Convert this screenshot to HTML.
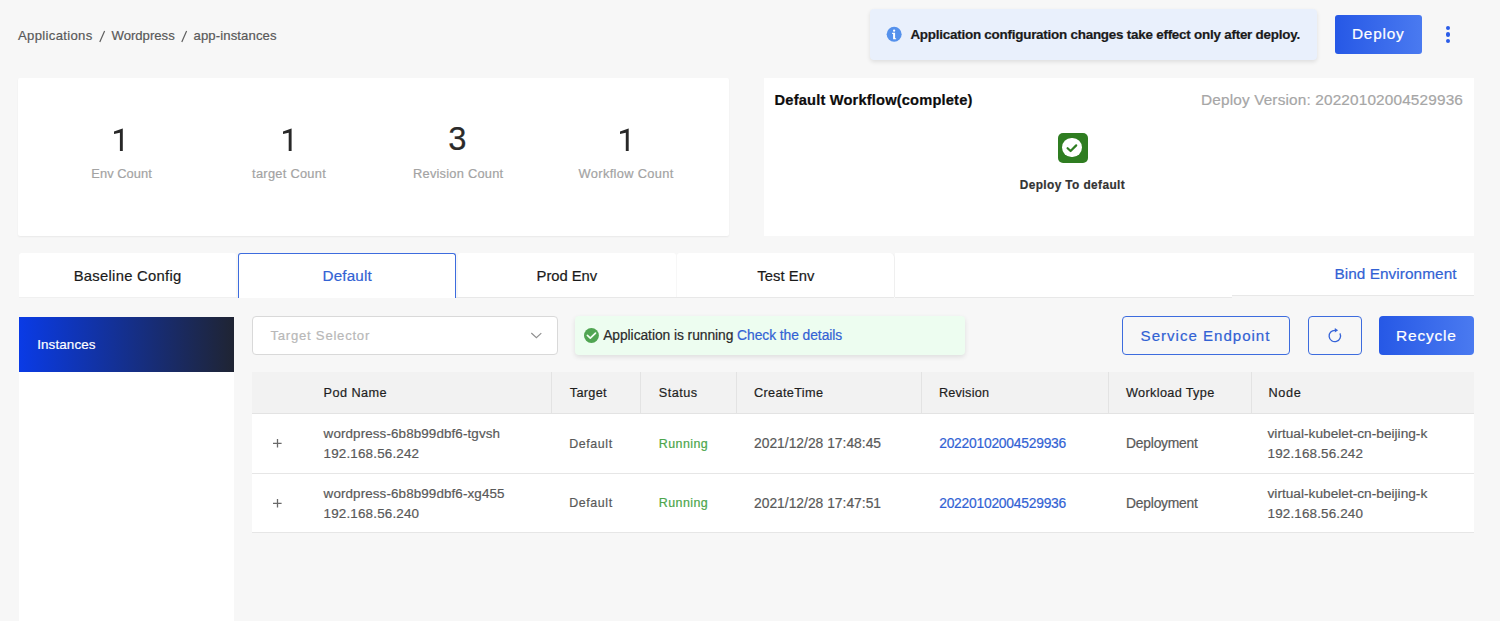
<!DOCTYPE html>
<html><head><meta charset="utf-8">
<style>
html,body{margin:0;padding:0;}
body{width:1500px;height:621px;overflow:hidden;background:#f7f7f7;position:relative;font-family:"Liberation Sans",sans-serif;}
.a{position:absolute;}
.t{position:absolute;white-space:nowrap;line-height:1;-webkit-text-stroke:0.2px currentColor;}
.card{position:absolute;background:#fff;border-radius:2px;box-shadow:0 1px 2px rgba(0,0,0,0.06);}
.tab{position:absolute;top:253px;height:44px;background:#fff;border-radius:3px 3px 0 0;box-sizing:border-box;}
.hd{position:absolute;top:372px;height:41px;width:1px;background:#e3e3e3;}
.row{position:absolute;left:252px;width:1222px;background:#fff;border-bottom:1px solid #e6e6e6;box-sizing:border-box;}
</style></head><body>

<!-- breadcrumb -->
<span class="t" style="left:18px;top:29px;font-size:13.13px;letter-spacing:0.32px;color:#595959;">Applications</span>
<svg class="a" style="left:97px;top:29px;" width="10" height="15" viewBox="0 0 10 15"><path d="M2.8 13 L7.6 2" stroke="#5e5e5e" stroke-width="1.15"/></svg>
<span class="t" style="left:111.5px;top:29px;font-size:13.13px;color:#595959;">Wordpress</span>
<svg class="a" style="left:178.7px;top:29px;" width="10" height="15" viewBox="0 0 10 15"><path d="M2.8 13 L7.6 2" stroke="#5e5e5e" stroke-width="1.15"/></svg>
<span class="t" style="left:193.5px;top:29px;font-size:13.13px;letter-spacing:0.11px;color:#595959;">app-instances</span>

<!-- info alert -->
<div class="a" style="left:870px;top:9px;width:447px;height:51px;background:#e9f0fc;border-radius:4px;box-shadow:0 2px 4px rgba(0,0,0,0.10);"></div>
<svg class="a" style="left:884px;top:24px;" width="20" height="20" viewBox="0 0 20 20"><circle cx="10.15" cy="10.3" r="7.5" fill="#5591ec"/><circle cx="10.1" cy="6.7" r="1.15" fill="#fff"/><path d="M8.1 8.8 H11.1 V14.2 H12.1 V15.3 H9.1 V9.9 H8.1 Z" fill="#fff"/></svg>
<span class="t" style="left:910.4px;top:27.9px;font-size:13.41px;font-weight:700;letter-spacing:-0.23px;color:#1a1a1a;">Application configuration changes take effect only after deploy.</span>

<!-- deploy btn -->
<div class="a" style="left:1335px;top:15px;width:87px;height:39px;border-radius:3px;background:linear-gradient(90deg,#2658e6,#4a7af0);"></div>
<span class="t" style="left:1352px;top:25.9px;font-size:15.36px;letter-spacing:0.77px;color:#fff;">Deploy</span>
<!-- kebab -->
<div class="a" style="left:1445.8px;top:25.8px;width:4.4px;height:4.4px;border-radius:50%;background:#2a5ce8;"></div>
<div class="a" style="left:1445.8px;top:32.3px;width:4.4px;height:4.4px;border-radius:50%;background:#2a5ce8;"></div>
<div class="a" style="left:1445.8px;top:38.8px;width:4.4px;height:4.4px;border-radius:50%;background:#2a5ce8;"></div>

<!-- card 1 -->
<div class="card" style="left:18px;top:78px;width:711px;height:158px;"></div>
<svg class="a" style="left:113.3px;top:127px;" width="14" height="26" viewBox="0 0 14 26"><path d="M6.90 24 V5.7 L1.00 7.1 V4.6 L9.60 1.4 H9.80 V24 Z" fill="#282828"/></svg>
<span class="t" style="left:91.3px;top:167.9px;font-size:12.85px;letter-spacing:0.06px;color:#a3a3a3;">Env Count</span>
<svg class="a" style="left:282px;top:127px;" width="14" height="26" viewBox="0 0 14 26"><path d="M6.70 24 V5.7 L1.00 7.1 V4.6 L9.40 1.4 H9.60 V24 Z" fill="#282828"/></svg>
<span class="t" style="left:252.1px;top:167.9px;font-size:12.85px;letter-spacing:0.27px;color:#a3a3a3;">target Count</span>
<span class="t" style="left:448.2px;top:122.9px;font-size:32.8px;color:#2a2a2a;">3</span>
<span class="t" style="left:413px;top:167.9px;font-size:12.85px;letter-spacing:0.23px;color:#a3a3a3;">Revision Count</span>
<svg class="a" style="left:618.8px;top:127px;" width="14" height="26" viewBox="0 0 14 26"><path d="M6.80 24 V5.7 L1.00 7.1 V4.6 L9.50 1.4 H9.70 V24 Z" fill="#282828"/></svg>
<span class="t" style="left:578.6px;top:167.9px;font-size:12.85px;letter-spacing:0.33px;color:#a3a3a3;">Workflow Count</span>

<!-- card 2 -->
<div class="a" style="left:764px;top:78px;width:710px;height:158px;background:#fff;"></div>
<span class="t" style="left:774.6px;top:93px;font-size:14.66px;font-weight:700;letter-spacing:0.17px;color:#0d0d0d;">Default Workflow(complete)</span>
<span class="t" style="left:1201px;top:92px;font-size:15.36px;letter-spacing:0.15px;color:#a6a6a6;">Deploy Version: 20220102004529936</span>
<div class="a" style="left:1058px;top:133px;width:30px;height:30px;border-radius:5px;background:#2f7d21;"></div>
<div class="a" style="left:1062.2px;top:137.6px;width:19.8px;height:19.8px;border-radius:50%;background:#fff;"></div>
<svg class="a" style="left:1062.2px;top:137.6px;" width="20" height="20" viewBox="0 0 20 20"><path d="M5.6 10.2 L8.6 13 L14.2 7.4" fill="none" stroke="#2f7d21" stroke-width="2.2" stroke-linecap="round" stroke-linejoin="round"/></svg>
<span class="t" style="left:1019.7px;top:180px;font-size:11.87px;font-weight:700;letter-spacing:0.4px;color:#333;">Deploy To default</span>

<!-- tabs -->
<div class="tab" style="left:19px;width:217px;"></div>
<div class="tab" style="left:238px;width:218px;border:1px solid #3d6cde;border-bottom:none;height:45px;"></div>
<div class="tab" style="left:458px;width:218px;"></div>
<div class="tab" style="left:677px;width:218px;border-right:1px solid #efefef;border-top-right-radius:5px;"></div>
<div class="a" style="left:895px;top:253px;width:337px;height:45px;background:#fff;border-bottom:1px solid #e8e8e8;box-sizing:border-box;"></div>
<div class="a" style="left:19px;top:297px;width:219px;height:1px;background:#f0f0f0;"></div>
<div class="a" style="left:456px;top:297px;width:438px;height:1px;background:#e8e8e8;"></div>
<div class="a" style="left:1232px;top:253px;width:242px;height:43px;background:#fff;border-bottom:1px solid #e8e8e8;box-sizing:border-box;"></div>
<span class="t" style="left:73.7px;top:268.5px;font-size:14.8px;letter-spacing:0.28px;color:#1a1a1a;">Baseline Config</span>
<span class="t" style="left:322.5px;top:267.8px;font-size:15.22px;letter-spacing:0.18px;color:#3262d4;">Default</span>
<span class="t" style="left:536.6px;top:268.5px;font-size:14.8px;letter-spacing:-0.04px;color:#1a1a1a;">Prod Env</span>
<span class="t" style="left:757.2px;top:268.5px;font-size:14.8px;letter-spacing:0.06px;color:#1a1a1a;">Test Env</span>
<span class="t" style="left:1334.4px;top:266.2px;font-size:15.36px;letter-spacing:0.06px;color:#3262d4;">Bind Environment</span>

<!-- sidebar -->
<div class="a" style="left:19px;top:317px;width:215px;height:320px;background:#fff;"></div>
<div class="a" style="left:19px;top:317px;width:215px;height:55px;background:linear-gradient(90deg,#0a3be6,#1f2433);"></div>
<span class="t" style="left:37.2px;top:337.6px;font-size:13.41px;letter-spacing:0.12px;color:#fff;">Instances</span>

<!-- select -->
<div class="a" style="left:252px;top:316px;width:306px;height:38.5px;background:#fff;border:1px solid #d9d9d9;border-radius:4px;box-sizing:border-box;"></div>
<span class="t" style="left:270.5px;top:328.9px;font-size:13.13px;letter-spacing:0.75px;color:#b8b8b8;">Target Selector</span>
<svg class="a" style="left:529.5px;top:331px;" width="13" height="8" viewBox="0 0 13 8"><path d="M1.3 2 L6.4 6.6 L11.3 2.1" fill="none" stroke="#8f8f8f" stroke-width="1.15"/></svg>

<!-- success alert -->
<div class="a" style="left:575px;top:316px;width:390px;height:38.5px;background:#edfdf0;border-radius:4px;box-shadow:0 2px 5px rgba(0,0,0,0.10);"></div>
<svg class="a" style="left:583.6px;top:327.7px;" width="15" height="15" viewBox="0 0 15 15"><circle cx="7.45" cy="7.45" r="7.45" fill="#50a552"/><path d="M3.4 7.4 L6.3 10.1 L11.5 5.1" fill="none" stroke="#f4fff4" stroke-width="1.7" stroke-linecap="round" stroke-linejoin="round"/></svg>
<span class="t" style="left:603.2px;top:328.8px;font-size:13.83px;letter-spacing:-0.06px;color:#2b2b2b;">Application is running <span style="color:#3262d4;">Check the details</span></span>

<!-- buttons -->
<div class="a" style="left:1122px;top:316px;width:168px;height:38.5px;border:1px solid #3d6cde;border-radius:4px;box-sizing:border-box;"></div>
<span class="t" style="left:1140.6px;top:328.3px;font-size:15.08px;letter-spacing:0.99px;color:#3262d4;">Service Endpoint</span>
<div class="a" style="left:1307.5px;top:316px;width:54px;height:38.5px;border:1px solid #3d6cde;border-radius:4px;box-sizing:border-box;"></div>
<svg class="a" style="left:1326px;top:327px;" width="18" height="18" viewBox="0 0 18 18"><path d="M9.2 3.3 A5.7 5.7 0 1 0 13.9 6.4" fill="none" stroke="#3563d8" stroke-width="1.3"/><path d="M8.8 1.1 L12.1 3.3 L8.8 5.5 Z" fill="#3563d8"/></svg>
<div class="a" style="left:1379px;top:316px;width:95px;height:38.5px;border-radius:4px;background:linear-gradient(90deg,#2658e6,#4a7af0);"></div>
<span class="t" style="left:1396px;top:327.6px;font-size:15.5px;letter-spacing:0.8px;color:#fff;">Recycle</span>

<!-- table -->
<div class="a" style="left:252px;top:372px;width:1222px;height:42px;background:#f2f2f2;border-bottom:1px solid #e3e3e3;box-sizing:border-box;"></div>
<div class="hd" style="left:551px;"></div>
<div class="hd" style="left:640px;"></div>
<div class="hd" style="left:736px;"></div>
<div class="hd" style="left:921px;"></div>
<div class="hd" style="left:1108px;"></div>
<div class="hd" style="left:1250.5px;"></div>
<span class="t" style="left:323.6px;top:387.1px;font-size:12.71px;letter-spacing:0.42px;color:#1f1f1f;">Pod Name</span>
<span class="t" style="left:569.8px;top:387.1px;font-size:12.71px;letter-spacing:0.29px;color:#1f1f1f;">Target</span>
<span class="t" style="left:658.7px;top:387.1px;font-size:12.71px;letter-spacing:0.5px;color:#1f1f1f;">Status</span>
<span class="t" style="left:754px;top:387.1px;font-size:12.71px;letter-spacing:0.35px;color:#1f1f1f;">CreateTime</span>
<span class="t" style="left:938.9px;top:387.1px;font-size:12.71px;letter-spacing:0.2px;color:#1f1f1f;">Revision</span>
<span class="t" style="left:1126px;top:387.1px;font-size:12.71px;letter-spacing:0.33px;color:#1f1f1f;">Workload Type</span>
<span class="t" style="left:1268.5px;top:387.1px;font-size:12.71px;letter-spacing:0.64px;color:#1f1f1f;">Node</span>

<div class="row" style="top:414px;height:60px;"></div>
<div class="row" style="top:474px;height:59px;"></div>

<!-- row 1 -->
<svg class="a" style="left:272.9px;top:439.2px;" width="9" height="9" viewBox="0 0 9 9"><path d="M4.5 0 V8.6 M0 4.3 H8.6" stroke="#6a6a6a" stroke-width="1.3"/></svg>
<span class="t" style="left:323.6px;top:427px;font-size:13.41px;letter-spacing:0.11px;color:#595959;">wordpress-6b8b99dbf6-tgvsh</span>
<span class="t" style="left:323.6px;top:447px;font-size:13.41px;letter-spacing:0.17px;color:#595959;">192.168.56.242</span>
<span class="t" style="left:569.2px;top:437.8px;font-size:12.43px;letter-spacing:0.6px;color:#595959;">Default</span>
<span class="t" style="left:658.7px;top:437.8px;font-size:12.43px;letter-spacing:0.47px;color:#4ca64c;">Running</span>
<span class="t" style="left:754px;top:437.3px;font-size:13.83px;letter-spacing:0.01px;color:#595959;">2021/12/28 17:48:45</span>
<span class="t" style="left:939.2px;top:437.3px;font-size:13.83px;letter-spacing:-0.23px;color:#3262d4;">20220102004529936</span>
<span class="t" style="left:1126.1px;top:437.3px;font-size:13.83px;letter-spacing:-0.22px;color:#595959;">Deployment</span>
<span class="t" style="left:1267.5px;top:427px;font-size:13.69px;color:#595959;">virtual-kubelet-cn-beijing-k</span>
<span class="t" style="left:1267.5px;top:447px;font-size:13.41px;letter-spacing:0.17px;color:#595959;">192.168.56.242</span>

<!-- row 2 -->
<svg class="a" style="left:272.9px;top:498.7px;" width="9" height="9" viewBox="0 0 9 9"><path d="M4.5 0 V8.6 M0 4.3 H8.6" stroke="#6a6a6a" stroke-width="1.3"/></svg>
<span class="t" style="left:323.6px;top:486.5px;font-size:13.41px;letter-spacing:0.11px;color:#595959;">wordpress-6b8b99dbf6-xg455</span>
<span class="t" style="left:323.6px;top:506.5px;font-size:13.41px;letter-spacing:0.17px;color:#595959;">192.168.56.240</span>
<span class="t" style="left:569.2px;top:497.3px;font-size:12.43px;letter-spacing:0.6px;color:#595959;">Default</span>
<span class="t" style="left:658.7px;top:497.3px;font-size:12.43px;letter-spacing:0.47px;color:#4ca64c;">Running</span>
<span class="t" style="left:754px;top:496.6px;font-size:13.83px;letter-spacing:0.01px;color:#595959;">2021/12/28 17:47:51</span>
<span class="t" style="left:939.2px;top:496.6px;font-size:13.83px;letter-spacing:-0.23px;color:#3262d4;">20220102004529936</span>
<span class="t" style="left:1126.1px;top:496.6px;font-size:13.83px;letter-spacing:-0.22px;color:#595959;">Deployment</span>
<span class="t" style="left:1267.5px;top:486.5px;font-size:13.69px;color:#595959;">virtual-kubelet-cn-beijing-k</span>
<span class="t" style="left:1267.5px;top:506.5px;font-size:13.41px;letter-spacing:0.17px;color:#595959;">192.168.56.240</span>

</body></html>
